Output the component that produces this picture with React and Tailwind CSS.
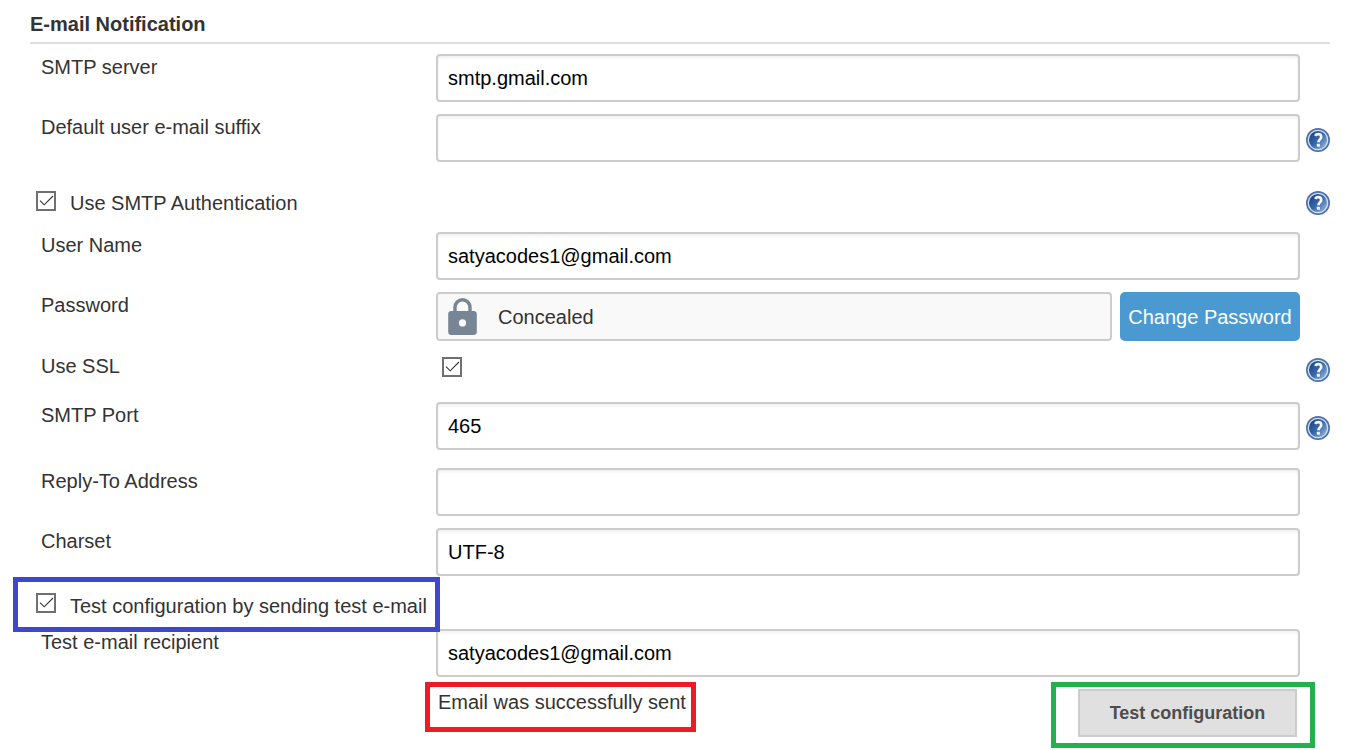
import { useId } from "react";

const rowClass = "grid grid-cols-[406px_minmax(0,1fr)_30px] items-start";
const labelClass = "block pl-[11px] leading-[26px]";
const inputClass =
  "block h-12 w-full rounded-[4px] border-2 border-[#ccc] bg-white px-[10px] text-black shadow-[inset_0_2px_3px_rgba(0,0,0,0.06)] outline-none focus:border-[#4b99d1]";

function HelpIcon() {
  const id = useId();
  return (
    <svg viewBox="0 0 24 24" className="block size-6" aria-hidden="true">
      <defs>
        <linearGradient id={id} x1="0.1" y1="0.2" x2="0.9" y2="0.9">
          <stop offset="0" stopColor="#1d4789" />
          <stop offset="0.45" stopColor="#3766a6" />
          <stop offset="1" stopColor="#93b4de" />
        </linearGradient>
      </defs>
      <circle cx="12" cy="12" r="12" fill="#4c72a9" />
      <circle cx="12" cy="12" r="9.8" fill={`url(#${id})`} />
      <circle cx="12" cy="12" r="9.7" fill="none" stroke="#d3dff0" strokeWidth="1.3" />
      <path
        d="M9.2 7.9C9.8 6.8 10.8 6.200 12.100 6.200c1.900 0 3.100 1.100 3.100 2.700 0 2.300-2.800 2.700-2.800 5.400"
        fill="none"
        stroke="#f4f7fc"
        strokeWidth="2.700"
      />
      <rect x="10.900" y="15.800" width="3" height="2.900" rx="0.400" fill="#f4f7fc" />
    </svg>
  );
}

function Help({ topic, className }) {
  return (
    <a href="#help" aria-label={`Help for ${topic}`} className={`justify-self-end ${className}`}>
      <HelpIcon />
    </a>
  );
}

function TextRow({ label, name, value = "", help, className }) {
  return (
    <div className={`${rowClass} ${className}`}>
      <label htmlFor={name} className={labelClass}>
        {label}
      </label>
      <input id={name} name={name} type="text" defaultValue={value} className={inputClass} />
      {help && <Help topic={label} className="mt-[14px]" />}
    </div>
  );
}

function Checkbox({ id }) {
  return (
    <span className="grid size-5 shrink-0">
      <input
        id={id}
        type="checkbox"
        defaultChecked
        className="peer col-start-1 row-start-1 size-5 appearance-none border-2 border-[#707070] bg-white"
      />
      <svg
        viewBox="0 0 20 20"
        className="pointer-events-none invisible col-start-1 row-start-1 size-5 peer-checked:visible"
        fill="none"
        stroke="#333"
        strokeWidth="1.100"
        aria-hidden="true"
      >
        <path d="M4 9.700 8.200 13.800 17 5" />
      </svg>
    </span>
  );
}

function LockIcon() {
  return (
    <svg viewBox="0 0 30 38" className="h-[38px] w-[30px] shrink-0" aria-hidden="true">
      <path d="M7 14V9.300a7.500 7.500 0 0 1 15 0V14" fill="none" stroke="#788594" strokeWidth="3.400" />
      <path
        fill="#788594"
        fillRule="evenodd"
        d="M3.500 13h22a3.300 3.300 0 0 1 3.300 3.300v17.400a3.300 3.300 0 0 1-3.300 3.300h-22A3.300 3.300 0 0 1 .2 33.700V16.300A3.300 3.300 0 0 1 3.500 13zM14.500 21.300a3.600 3.600 0 1 0 0 7.200 3.600 3.600 0 0 0 0-7.200z"
      />
    </svg>
  );
}

export default function App() {
  return (
    <main className="min-h-screen bg-white pt-3 pr-[18px] pl-[30px] font-['Liberation_Sans',Arial,sans-serif] text-[20px] text-[#333]">
      <form onSubmit={(e) => e.preventDefault()}>
        <h1 className="border-b-2 border-[#ddd] pb-[6px] text-[20px] leading-6 font-bold">E-mail Notification</h1>

        <TextRow label="SMTP server" name="server" value="smtp.gmail.com" className="mt-[10px]" />
        <TextRow label="Default user e-mail suffix" name="suffix" help className="mt-3" />

        <div className="mt-[29px] flex items-start pl-[6px]">
          <Checkbox id="auth" />
          <label htmlFor="auth" className="pl-[14px] leading-6">
            Use SMTP Authentication
          </label>
          <Help topic="Use SMTP Authentication" className="ml-auto" />
        </div>

        <TextRow label="User Name" name="user" value="satyacodes1@gmail.com" className="mt-[17px]" />

        <div className={`${rowClass} mt-3`}>
          <span className={labelClass}>Password</span>
          <div className="flex h-[49px] gap-2">
            <div className="flex flex-1 items-center gap-5 rounded-[4px] border-2 border-[#ccc] bg-[#f9f9f9] px-[10px]">
              <LockIcon />
              <span>Concealed</span>
            </div>
            <button
              type="button"
              className="w-[180px] rounded-[5px] bg-[#4b99d1] text-center whitespace-nowrap text-white"
            >
              Change Password
            </button>
          </div>
        </div>

        <div className={`${rowClass} mt-3`}>
          <label htmlFor="ssl" className={labelClass}>
            Use SSL
          </label>
          <div className="pt-1 pl-[6px]">
            <Checkbox id="ssl" />
          </div>
          <Help topic="Use SSL" className="mt-[5px]" />
        </div>

        <TextRow label="SMTP Port" name="port" value="465" help className="mt-5" />
        <TextRow label="Reply-To Address" name="reply" className="mt-[18px]" />
        <TextRow label="Charset" name="charset" value="UTF-8" className="mt-3" />

        <div className="relative mt-[17px] flex items-start pl-[6px]">
          <Checkbox id="test" />
          <label htmlFor="test" className="pl-[14px] leading-[26px]">
            Test configuration by sending test e-mail
          </label>
          <div className="pointer-events-none absolute -top-4 -left-[17px] z-10 h-[55px] w-[427px] border-5 border-[#3f48cc]" />
        </div>

        <TextRow label="Test e-mail recipient" name="recipient" value="satyacodes1@gmail.com" className="mt-[10px]" />

        <div className="mt-3 flex items-start justify-between pr-[33px] pl-[408px]">
          <div className="relative">
            <output className="block leading-[26px]">Email was successfully sent</output>
            <div className="pointer-events-none absolute -top-[7px] -left-[13px] z-10 h-[50px] w-[271px] border-5 border-[#ed1c24]" />
          </div>
          <div className="relative">
            <button
              type="submit"
              className="block h-12 w-[219px] border-2 border-[#ccc] bg-[#e0e0e0] text-[18px] font-bold text-[#4d4d4d]"
            >
              Test configuration
            </button>
            <div className="pointer-events-none absolute -top-[7px] -left-[27px] z-10 h-[66px] w-[264px] border-5 border-[#22b14c]" />
          </div>
        </div>
      </form>
    </main>
  );
}
